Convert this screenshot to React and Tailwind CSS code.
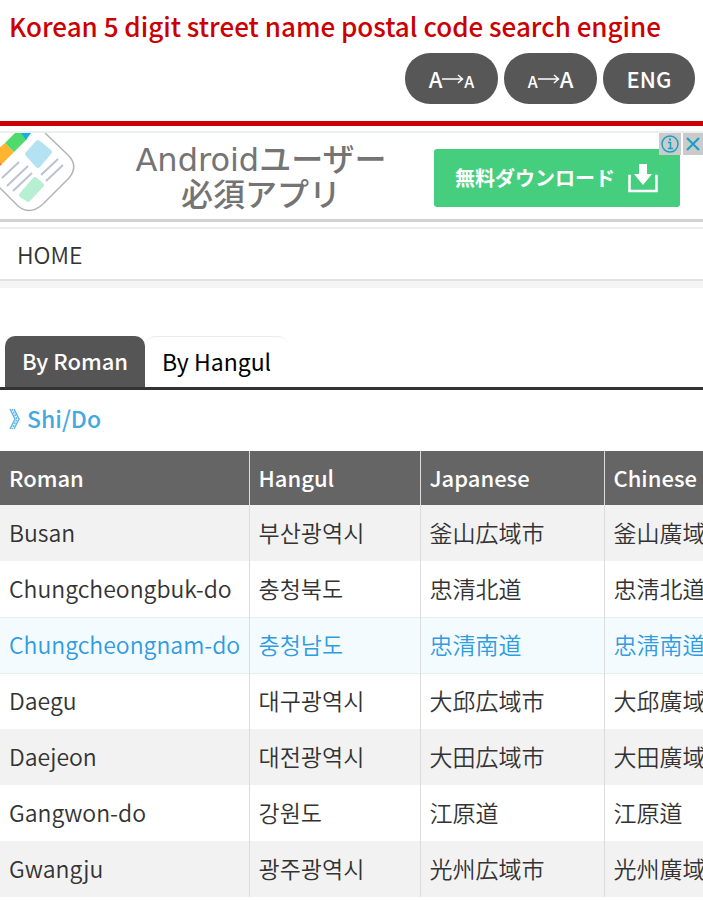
import React, { useState } from 'react';

const columns = [
  { label: 'Roman', width: 'w-[249px]' },
  { label: 'Hangul', width: 'w-[171px]' },
  { label: 'Japanese', width: 'w-[184px]' },
  { label: 'Chinese', width: 'w-[171px]' },
];

const regions = [
  { roman: 'Busan', hangul: '부산광역시', japanese: '釜山広域市', chinese: '釜山廣域市' },
  { roman: 'Chungcheongbuk-do', hangul: '충청북도', japanese: '忠清北道', chinese: '忠淸北道' },
  { roman: 'Chungcheongnam-do', hangul: '충청남도', japanese: '忠清南道', chinese: '忠淸南道' },
  { roman: 'Daegu', hangul: '대구광역시', japanese: '大邱広域市', chinese: '大邱廣域市' },
  { roman: 'Daejeon', hangul: '대전광역시', japanese: '大田広域市', chinese: '大田廣域市' },
  { roman: 'Gangwon-do', hangul: '강원도', japanese: '江原道', chinese: '江原道' },
  { roman: 'Gwangju', hangul: '광주광역시', japanese: '光州広域市', chinese: '光州廣域市' },
];

const AppIcon = () => (
  <svg className="h-[86px] w-[76px] shrink-0" viewBox="0 0 76 86" aria-hidden="true">
    <path d="M45 0 L68 22 Q79 33 69 45 L43 71 Q30 83 18 73 L-2 53" fill="#fff" stroke="#b4b4b4" strokeWidth="1.500" />
    <path d="M-1 15 L5 10 L14 19 L1 32 L-1 32 Z" fill="#ffb52e" />
    <path d="M5 10 L15 0 L22 0 L27 6 L14 19 Z" fill="#4fdb6b" />
    <path d="M21 0 H31 L26 7 Z" fill="#16aee8" />
    <path d="M0 30 L2 31 L0 33 Z" fill="#ff6a4a" />
    <path d="M36 8 Q38 6 40 8 L51 17 Q53 19 51 21 L40 34 Q38 36 36 34 L26 23 Q24 21 26 19 Z" fill="#b5e2f2" />
    <path d="M33 45 Q35 43 37 45 L43 50 Q45 52 43 54 L30 68 Q28 70 26 68 L20 64 Q18 62 20 60 Z" fill="#b6efd1" />
    <path d="M19 29 L2 45 M28 33 L7 53 M32 40 L13 58 M58 26 L41 42 M63 32 L46 48" stroke="#bcc2d0" strokeWidth="2" fill="none" />
  </svg>
);

const DownloadIcon = () => (
  <svg className="h-8 w-8 shrink-0" viewBox="0 0 32 32" aria-hidden="true">
    <path d="M12 2 H20 V12 H25 L16 23 L7 12 H12 Z" fill="#fff" />
    <path d="M4 14 H2.500 V29 H29.500 V14 H28" fill="none" stroke="#fff" strokeWidth="2.500" />
  </svg>
);

const Arrow = () => (
  <svg className="h-3 w-[22px]" viewBox="0 0 22 12" fill="none" stroke="#fff" strokeWidth="1.500" aria-hidden="true">
    <path d="M0 6 H20 M16 2 L20.500 6 L16 10" />
  </svg>
);

const AdBanner = () => (
  <section className="relative mt-[5px] flex h-[91px] items-center overflow-hidden border-t-2 border-b-[3px] border-t-[#eceff0] border-b-[#d2d2d2] pr-[23px]">
    <AppIcon />
    <p className="flex-1 pt-1 pr-5 pl-8 text-center font-['DejaVu_Sans','Noto_Sans_CJK_JP',sans-serif] text-[32px] leading-[35px] whitespace-nowrap text-[#747474]">
      Android<span className="font-medium">ユーザー</span>
      <br />
      <span className="font-medium">必須アプリ</span>
    </p>
    <button
      type="button"
      className="mt-1 flex h-[58px] w-[246px] shrink-0 items-center justify-center gap-3 rounded-[3px] bg-[#46ce7f] font-['Noto_Sans_CJK_JP',sans-serif] text-[20px] font-bold whitespace-nowrap text-white"
    >
      無料ダウンロード
      <DownloadIcon />
    </button>
    <div className="absolute top-0 right-0 flex gap-[2px]">
      <button type="button" aria-label="Ad info" className="flex h-[22px] w-[22px] items-center justify-center bg-[#cbcbcb]">
        <svg className="h-[20px] w-[20px]" viewBox="0 0 20 20" fill="none" stroke="#18a0c4">
          <circle cx="10" cy="10" r="8" strokeWidth="1.500" />
          <path d="M8 8.500 H10.500 V14 M8 14.500 H13" strokeWidth="1.500" />
          <path d="M10 4.500 V6.500" strokeWidth="2" />
        </svg>
      </button>
      <button type="button" aria-label="Close ad" className="flex h-[22px] w-[20px] items-center justify-center bg-[#cbcbcb]">
        <svg className="h-[16px] w-[16px]" viewBox="0 0 16 16" fill="none" stroke="#18a0c4" strokeWidth="2">
          <path d="M2 2 L14 14 M14 2 L2 14" />
        </svg>
      </button>
    </div>
  </section>
);

const pill = 'flex h-[51px] items-center justify-center rounded-[25px] bg-[#575757] text-[22px] font-medium text-white';

const App = () => {
  const [tab, setTab] = useState('roman');
  const [selected, setSelected] = useState('Chungcheongnam-do');

  const tabClass = (name) =>
    name === tab
      ? 'h-[51px] rounded-t-[10px] bg-[#555] px-[17px] pb-[2px] text-[22px] text-white font-medium'
      : 'h-[51px] rounded-t-[10px] border-t border-[#ececec] px-[17px] pb-[2px] text-black';

  return (
    <div className="min-h-screen overflow-hidden bg-white font-['Noto_Sans_CJK_KR',sans-serif] text-[23px] text-[#333]">
      <header className="border-b-[5px] border-[#cc0000] pb-[17px]">
        <h1 className="px-[9px] pt-2 text-[26px] leading-9 font-medium whitespace-nowrap text-[#cc0000]">
          Korean 5 digit street name postal code search engine
        </h1>
        <div className="mt-[9px] flex justify-end gap-[6px] pr-2">
          <button type="button" aria-label="Smaller text" className={`${pill} w-[93px]`}>
            <span>A</span>
            <Arrow />
            <span className="pt-1 text-[16px]">A</span>
          </button>
          <button type="button" aria-label="Larger text" className={`${pill} w-[93px]`}>
            <span className="pt-1 text-[16px]">A</span>
            <Arrow />
            <span>A</span>
          </button>
          <button type="button" className={`${pill} w-[92px]`}>ENG</button>
        </div>
      </header>

      <AdBanner />

      <nav className="mt-[5px] flex h-[61px] items-center border-t-2 border-b-[7px] border-t-[#ededed] border-b-[#f4f4f4]">
        <a href="#home" className="flex h-full w-full items-center border-b-2 border-[#e2e2e2] px-[17px] font-[350]">HOME</a>
      </nav>

      <main className="pt-12">
        <div className="flex border-b-[3px] border-[#333] pl-[5px]">
          <button type="button" onClick={() => setTab('roman')} className={tabClass('roman')}>
            By Roman
          </button>
          <button type="button" onClick={() => setTab('hangul')} className={tabClass('hangul')}>
            By Hangul
          </button>
        </div>

        <h2 className="flex h-[61px] items-center gap-[6px] px-[9px] pb-1 font-medium text-[#46a8e2]">
          <svg className="h-[22px] w-3" viewBox="0 0 12 22" fill="none" stroke="#63b7e8" strokeWidth="1.500" aria-hidden="true">
            <path d="M1 1 L6 11 L1 21 M5 1 L10 11 L5 21" />
            <path d="M3 1 L8 11 L3 21" strokeDasharray="2 1" />
          </svg>
          Shi/Do
        </h2>

        <table className="w-[775px] table-fixed border-collapse text-left font-[350] whitespace-nowrap">
          <thead>
            <tr className="h-[54px] bg-[#656565] text-[22px] text-white">
              {columns.map((col) => (
                <th key={col.label} className={`${col.width} border-r border-[#dcdcdc] px-[9px] pb-[2px] font-medium`}>
                  {col.label}
                </th>
              ))}
            </tr>
          </thead>
          <tbody>
            {regions.map((region) => (
              <tr
                key={region.roman}
                onClick={() => setSelected(region.roman)}
                className={
                  region.roman === selected
                    ? 'h-14 border-y border-[#e6eef2] bg-[#f4fbff] text-[#2f9be0]'
                    : 'h-14 odd:bg-[#f2f2f2]'
                }
              >
                <td className="border-r border-[#dcdcdc] px-[9px] pb-[2px]">{region.roman}</td>
                <td className="border-r border-[#dcdcdc] px-[9px] pb-[2px]">{region.hangul}</td>
                <td lang="ja" className="border-r border-[#dcdcdc] px-[9px] pb-[2px] font-['Noto_Sans_CJK_JP',sans-serif]">{region.japanese}</td>
                <td className="px-[9px] pb-[2px]">{region.chinese}</td>
              </tr>
            ))}
          </tbody>
        </table>
      </main>
    </div>
  );
};

export default App;
